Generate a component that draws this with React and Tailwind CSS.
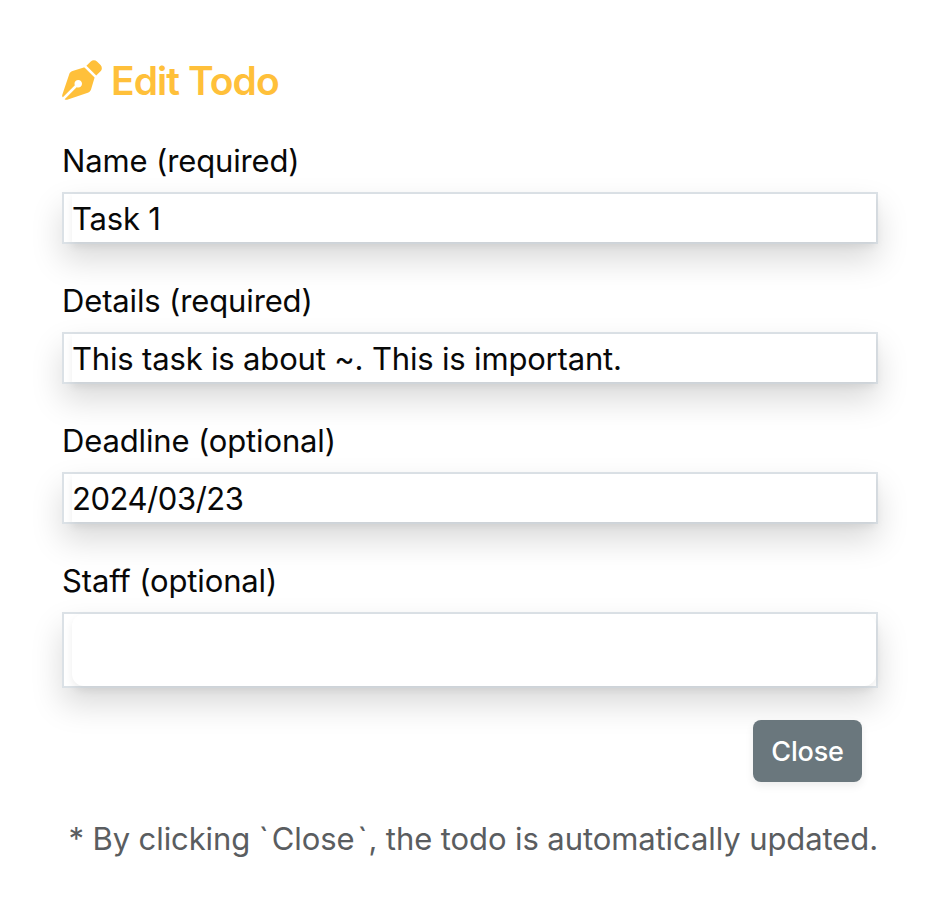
import { FaPenNib } from "react-icons/fa6";

const fields = [
  { label: "Name (required)", value: "Task 1", valueTrack: "tracking-[-0.2px]" },
  { label: "Details (required)", value: "This task is about ~. This is important.", valueTrack: "tracking-[-0.17px]" },
  { label: "Deadline (optional)", value: "2024/03/23", valueTrack: "tracking-[-0.45px]" },
];

const labelClass = "h-12 pt-px text-[31px] leading-12 tracking-[-0.14px] whitespace-nowrap";
const frameClass = "mt-2 border-2 border-[#dbe1e6] pl-2 shadow-[0_16px_32px_rgba(0,0,0,0.15)]";

export default function App() {
  return (
    <main className="h-[914px] w-[934px] bg-white pl-[62px] pr-14 pt-14 font-['Inter',sans-serif] font-[430] text-[#080808]">
      <h1 className="flex h-12 items-center gap-[9px] text-[39px] font-semibold leading-12 text-[#ffc03a]">
        <FaPenNib className="size-10" />
        <span className="whitespace-nowrap pt-0.5 tracking-[-0.95px]">Edit Todo</span>
      </h1>

      <form className="mt-8 flex flex-col gap-8">
        {fields.map((f) => (
          <label key={f.label} className="block">
            <div className={labelClass}>{f.label}</div>
            <div className={frameClass}>
              <div className={`h-12 whitespace-nowrap bg-white pt-px text-[31px] leading-12 shadow-[0_4px_8px_rgba(0,0,0,0.075)] ${f.valueTrack}`}>
                {f.value}
              </div>
            </div>
          </label>
        ))}
        <label className="block">
          <div className={labelClass}>Staff (optional)</div>
          <div className={frameClass}>
            <div className="h-[72px] rounded-xl bg-white shadow-[0_4px_8px_rgba(0,0,0,0.075)]" />
          </div>
        </label>
      </form>

      <div className="mt-8 flex justify-end pr-4">
        <button
          type="button"
          className="h-[62px] w-[109px] rounded-lg bg-[#6a777d] pt-px text-[27px] font-medium leading-[42px] tracking-[-0.2px] text-white shadow-[0_4px_8px_rgba(0,0,0,0.075)]"
        >
          Close
        </button>
      </div>

      <p className="mt-8 whitespace-nowrap pt-px text-right text-[31px] leading-12 tracking-[-0.09px] text-[#5a5d60]">
        * By clicking <span className="pr-[3px]">`</span>Close<span className="pl-[3px] pr-px">`</span>, the todo is automatically updated.
      </p>
    </main>
  );
}
